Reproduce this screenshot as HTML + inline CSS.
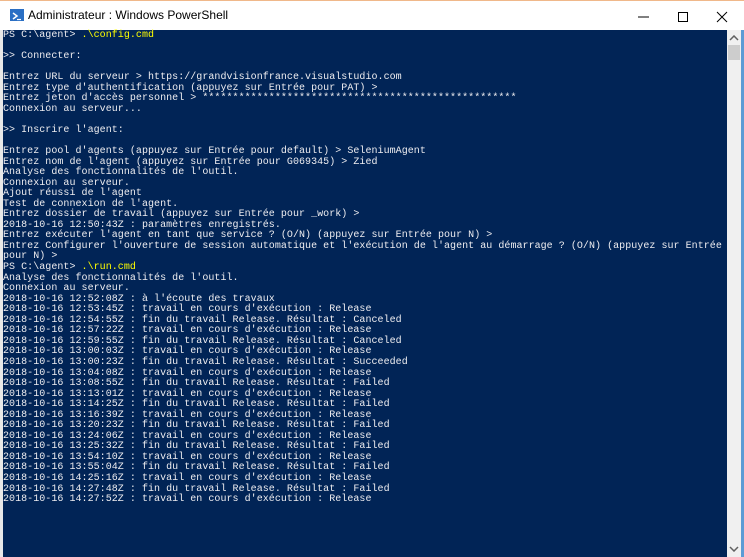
<!DOCTYPE html>
<html><head><meta charset="utf-8"><style>
html,body{margin:0;padding:0;width:744px;height:556px;overflow:hidden;background:#fff;}
.win{position:absolute;left:0;top:0;width:744px;height:556px;background:#fff;border-top:1px solid #f0b88a;box-sizing:border-box;}
.title{position:absolute;left:0;top:0;width:744px;height:29px;background:#fff;}
.title .t{position:absolute;left:28px;top:7px;font:12px "Liberation Sans",sans-serif;color:#000;}
.icon{position:absolute;left:10px;top:8px;width:14px;height:12px;background:#2a6fc4;}
.con{position:absolute;left:3px;top:29px;width:724px;height:527px;background:#012456;}
pre{margin:0;position:absolute;left:0;top:1px;font:10px/10.545px "Liberation Mono",monospace;letter-spacing:0.04px;color:#eeedf0;white-space:pre;}
.y{color:#ffff00;}
.sb{position:absolute;left:727px;top:29px;width:14px;height:527px;background:#f0f0f0;}
.thumb{position:absolute;left:728px;top:44px;width:12px;height:15px;background:#cdcdcd;}
.rb{position:absolute;left:741px;top:29px;width:3px;height:527px;background:#5b9bd5;}
.lb{position:absolute;left:0;top:29px;width:3px;height:527px;background:#e8e8e8;}
</style></head><body>
<div class="win">
<div class="title">
<div class="icon"><svg width="14" height="12" viewBox="0 0 14 12"><path d="M3 3 L7 6 L3 9" stroke="#fff" stroke-width="1.5" fill="none"/><path d="M7 9.5 H11" stroke="#fff" stroke-width="1.2"/></svg></div>
<div class="t">Administrateur : Windows PowerShell</div>
<svg style="position:absolute;left:630px;top:8px" width="110" height="16" viewBox="0 0 110 16">
<path d="M8 8 H19" stroke="#000" stroke-width="1"/>
<rect x="48.5" y="3.5" width="9" height="9" stroke="#000" fill="none"/>
<path d="M87 3 L97 13 M97 3 L87 13" stroke="#000" stroke-width="1"/>
</svg>
</div>
<div class="lb"></div>
<div class="con"><pre>PS C:\agent&gt; <span class="y">.\config.cmd</span>

&gt;&gt; Connecter:

Entrez URL du serveur &gt; https://grandvisionfrance.visualstudio.com
Entrez type d'authentification (appuyez sur Entrée pour PAT) &gt;
Entrez jeton d'accès personnel &gt; ****************************************************
Connexion au serveur...

&gt;&gt; Inscrire l'agent:

Entrez pool d'agents (appuyez sur Entrée pour default) &gt; SeleniumAgent
Entrez nom de l'agent (appuyez sur Entrée pour G069345) &gt; Zied
Analyse des fonctionnalités de l'outil.
Connexion au serveur.
Ajout réussi de l'agent
Test de connexion de l'agent.
Entrez dossier de travail (appuyez sur Entrée pour _work) &gt;
2018-10-16 12:50:43Z : paramètres enregistrés.
Entrez exécuter l'agent en tant que service ? (O/N) (appuyez sur Entrée pour N) &gt;
Entrez Configurer l'ouverture de session automatique et l'exécution de l'agent au démarrage ? (O/N) (appuyez sur Entrée
pour N) &gt;
PS C:\agent&gt; <span class="y">.\run.cmd</span>
Analyse des fonctionnalités de l'outil.
Connexion au serveur.
2018-10-16 12:52:08Z : à l'écoute des travaux
2018-10-16 12:53:45Z : travail en cours d'exécution : Release
2018-10-16 12:54:55Z : fin du travail Release. Résultat : Canceled
2018-10-16 12:57:22Z : travail en cours d'exécution : Release
2018-10-16 12:59:55Z : fin du travail Release. Résultat : Canceled
2018-10-16 13:00:03Z : travail en cours d'exécution : Release
2018-10-16 13:00:23Z : fin du travail Release. Résultat : Succeeded
2018-10-16 13:04:08Z : travail en cours d'exécution : Release
2018-10-16 13:08:55Z : fin du travail Release. Résultat : Failed
2018-10-16 13:13:01Z : travail en cours d'exécution : Release
2018-10-16 13:14:25Z : fin du travail Release. Résultat : Failed
2018-10-16 13:16:39Z : travail en cours d'exécution : Release
2018-10-16 13:20:23Z : fin du travail Release. Résultat : Failed
2018-10-16 13:24:06Z : travail en cours d'exécution : Release
2018-10-16 13:25:32Z : fin du travail Release. Résultat : Failed
2018-10-16 13:54:10Z : travail en cours d'exécution : Release
2018-10-16 13:55:04Z : fin du travail Release. Résultat : Failed
2018-10-16 14:25:16Z : travail en cours d'exécution : Release
2018-10-16 14:27:48Z : fin du travail Release. Résultat : Failed
2018-10-16 14:27:52Z : travail en cours d'exécution : Release</pre></div>
<div class="sb"></div>
<div class="thumb"></div>
<svg style="position:absolute;left:729px;top:34px" width="10" height="6" viewBox="0 0 10 6"><path d="M1 5 L5 1 L9 5" stroke="#606060" stroke-width="1.5" fill="none"/></svg>
<svg style="position:absolute;left:729px;top:545px" width="10" height="6" viewBox="0 0 10 6"><path d="M1 1 L5 5 L9 1" stroke="#606060" stroke-width="1.5" fill="none"/></svg>
<div class="rb"></div>
</div>
</body></html>
